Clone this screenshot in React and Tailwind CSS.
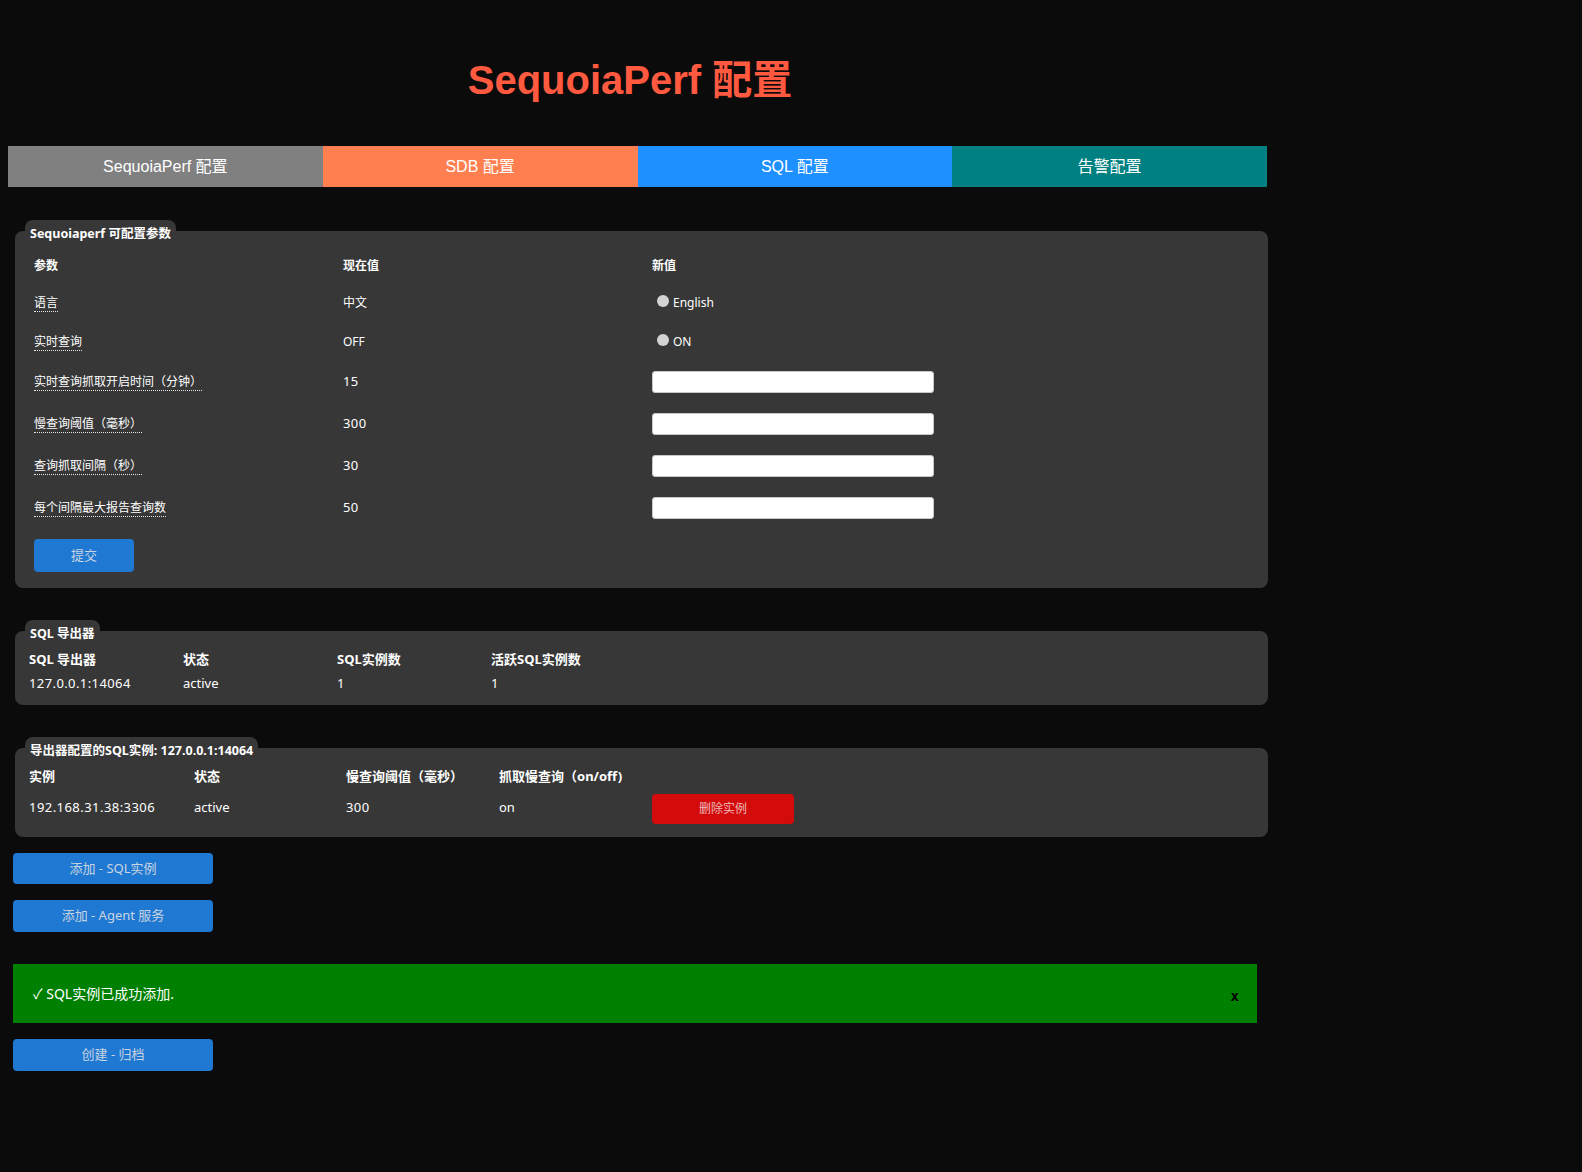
import React from "react";

function Legend({ children }) {
  return (
    <div className="relative z-10 ml-[10px] self-start rounded-t-[8px] bg-[#373737] px-[5px] h-[22px] text-[12.5px] font-bold leading-[28px] text-white whitespace-nowrap">
      {children}
    </div>
  );
}

function Panel({ legend, children, className }) {
  return (
    <div className={"ml-[15px] w-[1253px] flex flex-col " + (className || "")}>
      <Legend>{legend}</Legend>
      <div className="-mt-[11px] rounded-[8px] bg-[#373737]">{children}</div>
    </div>
  );
}

function Label({ children }) {
  return (
    <span className="border-b border-dotted border-[#e5e5e5] leading-[17px]">{children}</span>
  );
}

function Radio({ label }) {
  return (
    <label className="flex items-center gap-[4px]">
      <input
        type="radio"
        className="appearance-none w-[12px] h-[12px] rounded-full bg-[#d3d3d3] mb-[4px]"
      />
      <span>{label}</span>
    </label>
  );
}

function TextInput() {
  return (
    <input
      type="text"
      className="w-[282px] h-[22px] bg-white rounded-[3px] border border-[#c8c8c8] outline-none"
    />
  );
}

const blueBtn =
  "ml-[13px] w-[200px] rounded-[4px] bg-[#1f78d1] text-[13px] text-[#c9d4e2] flex items-center justify-center";

export default function App() {
  const rows = [
    { label: "实时查询抓取开启时间（分钟）", value: "15" },
    { label: "慢查询阈值（毫秒）", value: "300" },
    { label: "查询抓取间隔（秒）", value: "30" },
    { label: "每个间隔最大报告查询数", value: "50" },
  ];
  return (
    <div className="min-h-screen bg-[#0b0b0b] text-white font-['Noto_Sans','Noto_Sans_CJK_SC',sans-serif] text-[13px] pb-[40px]">
      <div className="w-[1244px] ml-2 pt-[57px] flex justify-center">
        <h1 className="text-[40px] leading-[46px] font-bold text-[#ff5a40] font-['Liberation_Sans','Noto_Sans_CJK_SC',sans-serif]">
          SequoiaPerf 配置
        </h1>
      </div>

      <div className="mt-[43px] ml-2 grid grid-cols-4 w-[1259px] h-[41px] text-[16px] font-['Liberation_Sans','Noto_Sans_CJK_SC',sans-serif] text-white">
        <div className="bg-[#808080] flex items-center justify-center pt-[1px]">SequoiaPerf 配置</div>
        <div className="bg-[#ff7f50] flex items-center justify-center pt-[1px]">SDB 配置</div>
        <div className="bg-[#1e90ff] flex items-center justify-center pt-[1px]">SQL 配置</div>
        <div className="bg-[#008080] flex items-center justify-center pt-[1px]">告警配置</div>
      </div>

      <Panel legend="Sequoiaperf 可配置参数" className="mt-[33px]">
        <div className="pt-[15px] pb-[16px] pl-[19px] text-[12px]">
          <div className="grid grid-cols-[309px_309px_1fr] h-[38px] items-center font-bold pt-[1px]">
            <div>参数</div>
            <div>现在值</div>
            <div>新值</div>
          </div>
          <div className="grid grid-cols-[309px_309px_1fr] h-[38px] items-center">
            <div><Label>语言</Label></div>
            <div>中文</div>
            <div className="pl-[5px]"><Radio label="English" /></div>
          </div>
          <div className="grid grid-cols-[309px_309px_1fr] h-[39px] items-center">
            <div><Label>实时查询</Label></div>
            <div>OFF</div>
            <div className="pl-[5px]"><Radio label="ON" /></div>
          </div>
          {rows.map((r) => (
            <div key={r.label} className="grid grid-cols-[309px_309px_1fr] h-[42px] items-center">
              <div><Label>{r.label}</Label></div>
              <div className="text-[13px] tracking-[0.4px]">{r.value}</div>
              <div className="flex"><TextInput /></div>
            </div>
          ))}
          <button className="mt-[10px] w-[100px] h-[33px] rounded-[4px] bg-[#1f78d1] text-[13px] text-[#c9d4e2]">
            提交
          </button>
        </div>
      </Panel>

      <Panel legend="SQL 导出器" className="mt-[32px]">
        <div className="pt-[17px] pb-[9px] pl-[14px]">
          <div className="grid grid-cols-[154px_154px_154px_154px] h-[24px] items-center font-bold">
            <div>SQL 导出器</div>
            <div>状态</div>
            <div>SQL实例数</div>
            <div>活跃SQL实例数</div>
          </div>
          <div className="grid grid-cols-[154px_154px_154px_154px] h-[24px] items-center">
            <div className="tracking-[0.4px]">127.0.0.1:14064</div>
            <div>active</div>
            <div>1</div>
            <div>1</div>
          </div>
        </div>
      </Panel>

      <Panel legend="导出器配置的SQL实例: 127.0.0.1:14064" className="mt-[32px]">
        <div className="pt-[17px] pb-[10px] pl-[14px]">
          <div className="grid grid-cols-[165px_152px_153px_153px_1fr] h-[24px] items-center font-bold">
            <div>实例</div>
            <div>状态</div>
            <div>慢查询阈值（毫秒）</div>
            <div>抓取慢查询（on/off)</div>
            <div></div>
          </div>
          <div className="grid grid-cols-[165px_152px_153px_153px_1fr] h-[38px] items-center">
            <div className="tracking-[0.45px]">192.168.31.38:3306</div>
            <div>active</div>
            <div className="tracking-[0.4px]">300</div>
            <div>on</div>
            <div className="flex">
              <button className="mt-[2px] w-[142px] h-[30px] rounded-[4px] bg-[#d40b0b] text-[12px] text-[#eab9b9]">
                删除实例
              </button>
            </div>
          </div>
        </div>
      </Panel>

      <button className={blueBtn + " mt-[16px] h-[31px]"}>添加 - SQL实例</button>
      <button className={blueBtn + " mt-[16px] h-[32px]"}>添加 - Agent 服务</button>

      <div className="mt-[32px] ml-[13px] w-[1244px] h-[59px] bg-[#008000] flex items-center justify-between pl-[20px] pr-[18px]">
        <span className="text-[14px] text-white">✓ SQL实例已成功添加.</span>
        <span className="text-[14px] font-bold text-black font-['DejaVu_Sans_Mono',monospace] mt-[5px]">x</span>
      </div>

      <button className={blueBtn + " mt-[16px] h-[32px]"}>创建 - 归档</button>
    </div>
  );
}
